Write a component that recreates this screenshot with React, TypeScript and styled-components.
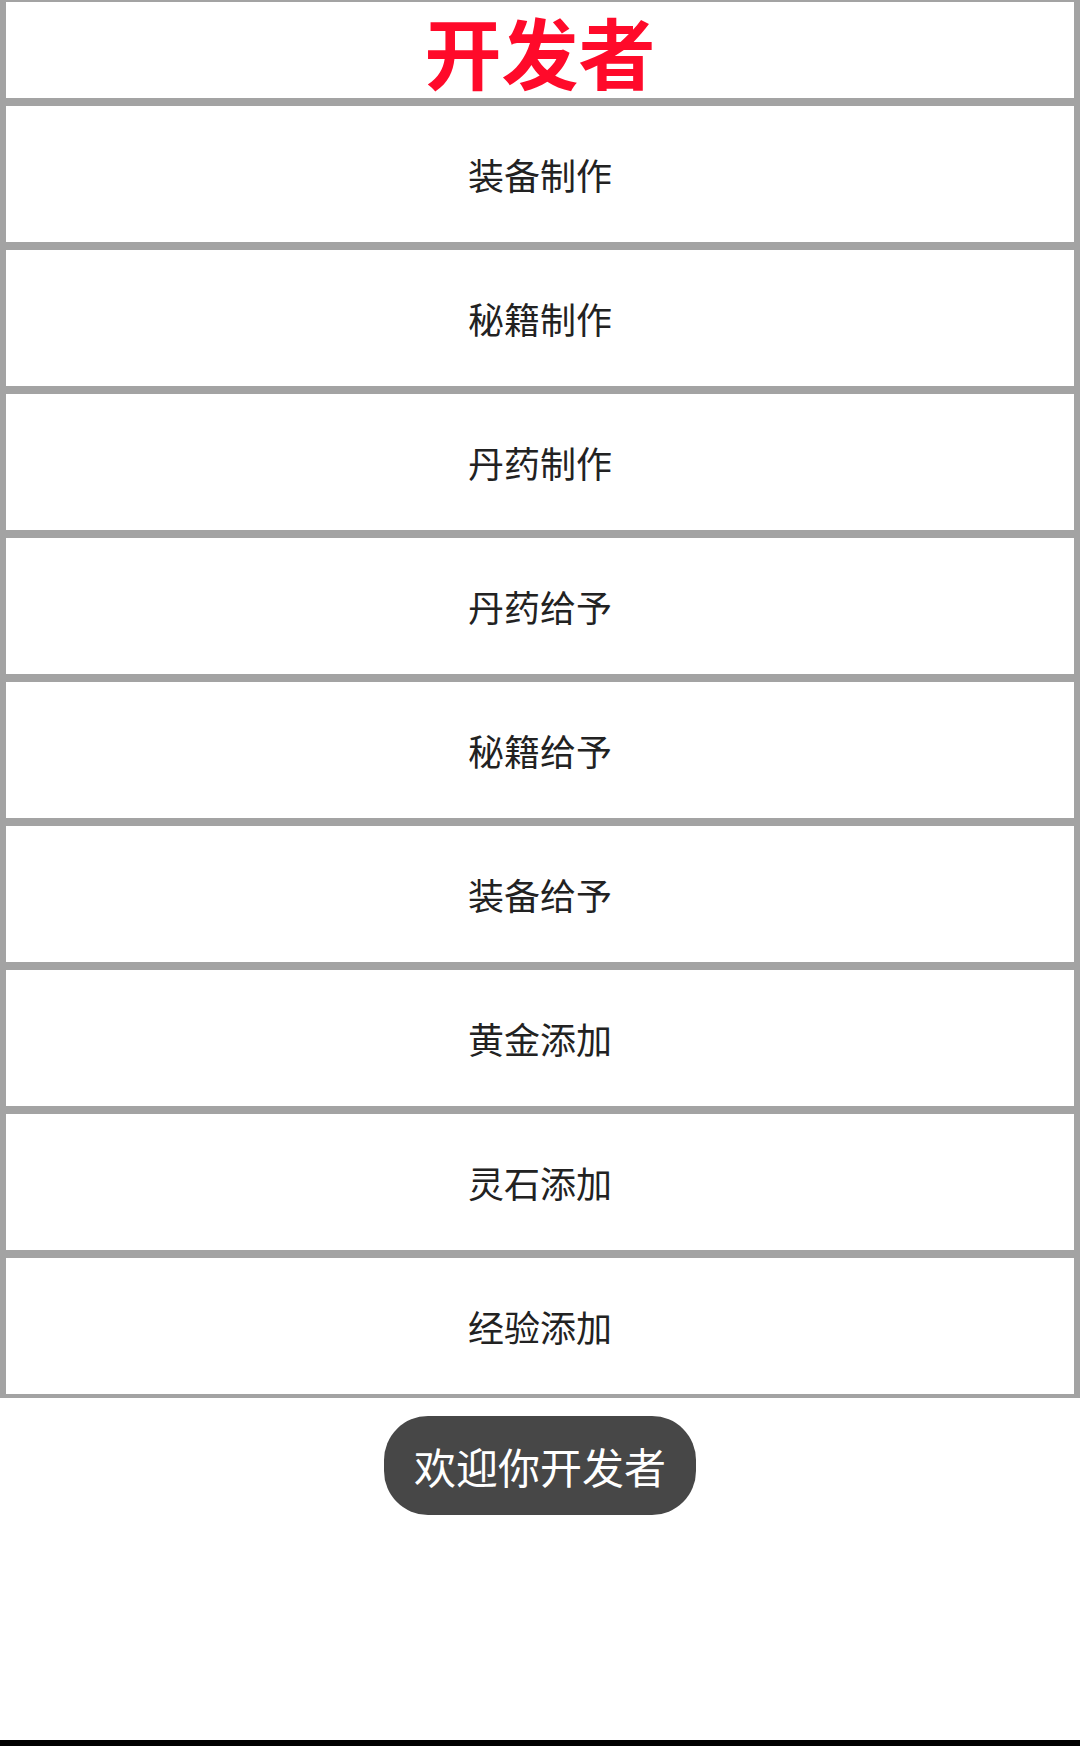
import styled, { createGlobalStyle } from "styled-components";

const GlobalStyle = createGlobalStyle`
  html, body {
    margin: 0;
    padding: 0;
    background: #ffffff;
  }
  body {
    font-family: "Noto Sans CJK SC", "Noto Sans", sans-serif;
  }
`;

const Page = styled.div`
  height: 1746px;
  display: flex;
  flex-direction: column;
  box-sizing: border-box;
  border-bottom: 6px solid #000;
`;

const List = styled.div`
  display: flex;
  flex-direction: column;
  gap: 8px;
  padding: 2px 6px 4px 6px;
  background: #a3a3a3;
`;

const TitleBox = styled.div`
  height: 96px;
  background: #fff;
  display: flex;
  align-items: center;
  justify-content: center;
`;

const Title = styled.h1`
  margin: 0;
  padding-top: 2px;
  font-size: 77px;
  line-height: 1.2;
  font-weight: 700;
  color: #ff0a2a;
`;

const Row = styled.button`
  height: 136px;
  border: none;
  padding: 0;
  background: #fff;
  font-family: inherit;
  font-size: 36px;
  font-weight: 400;
  color: #222;
  cursor: pointer;
`;

const ToastArea = styled.div`
  display: flex;
  justify-content: center;
  padding-top: 18px;
`;

const Toast = styled.div`
  height: 99px;
  box-sizing: border-box;
  padding: 0 30px;
  display: flex;
  align-items: center;
  border-radius: 44px;
  background: #474747;
  color: #fff;
  font-size: 42px;
`;

const items = [
  "装备制作",
  "秘籍制作",
  "丹药制作",
  "丹药给予",
  "秘籍给予",
  "装备给予",
  "黄金添加",
  "灵石添加",
  "经验添加",
];

const App = () => {
  return (
    <>
      <GlobalStyle />
      <Page>
        <List>
          <TitleBox>
            <Title>开发者</Title>
          </TitleBox>
          {items.map((item) => (
            <Row key={item} type="button">
              {item}
            </Row>
          ))}
        </List>
        <ToastArea>
          <Toast>欢迎你开发者</Toast>
        </ToastArea>
      </Page>
    </>
  );
};

export default App;
